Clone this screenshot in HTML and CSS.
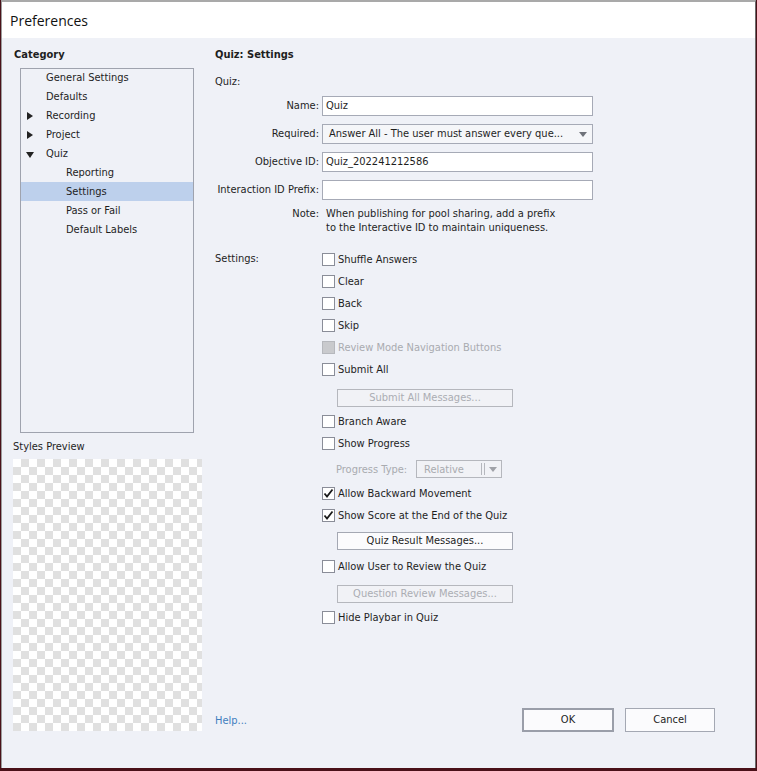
FILE: index.html
```html
<!DOCTYPE html>
<html>
<head>
<meta charset="utf-8">
<link rel="stylesheet" href="styles.css">
</head>
<body>
<div class="dialog">
  <div class="titlebar">Preferences</div>
  <div class="main">
    <div class="left">
      <div class="heading cat">Category</div>
      <div class="tree">
        <div class="node lvl0">General Settings</div>
        <div class="node lvl0">Defaults</div>
        <div class="node lvl0"><span class="tri right"></span>Recording</div>
        <div class="node lvl0"><span class="tri right"></span>Project</div>
        <div class="node lvl0"><span class="tri down"></span>Quiz</div>
        <div class="node lvl1">Reporting</div>
        <div class="node lvl1 sel">Settings</div>
        <div class="node lvl1">Pass or Fail</div>
        <div class="node lvl1">Default Labels</div>
      </div>
      <div class="preview-label">Styles Preview</div>
      <div class="checker"></div>
    </div>
    <div class="right">
      <div class="heading">Quiz: Settings</div>
      <div class="sect">Quiz:</div>
      <div class="form">
        <div class="flabel">Name:</div>
        <div class="input">Quiz</div>
        <div class="flabel">Required:</div>
        <div class="input select"><span class="seltext">Answer All - The user must answer every que...</span><span class="arrow"></span></div>
        <div class="flabel">Objective ID:</div>
        <div class="input">Quiz_202241212586</div>
        <div class="flabel">Interaction ID Prefix:</div>
        <div class="input"></div>
      </div>
      <div class="note">
        <div class="flabel">Note:</div>
        <div class="notetext">When publishing for pool sharing, add a prefix<br>to the Interactive ID to maintain uniqueness.</div>
      </div>
      <div class="settings">
        <div class="slabel">Settings:</div>
        <div class="opts">
          <div class="cb"><span class="box"></span>Shuffle Answers</div>
          <div class="cb"><span class="box"></span>Clear</div>
          <div class="cb"><span class="box"></span>Back</div>
          <div class="cb"><span class="box"></span>Skip</div>
          <div class="cb disabled"><span class="box"></span>Review Mode Navigation Buttons</div>
          <div class="cb"><span class="box"></span>Submit All</div>
          <div class="btn wide disabled b1">Submit All Messages...</div>
          <div class="cb r-after-btn"><span class="box"></span>Branch Aware</div>
          <div class="cb"><span class="box"></span>Show Progress</div>
          <div class="ptype">
            <span class="plabel">Progress Type:</span>
            <span class="psel"><span class="ptext">Relative</span><span class="pbar"></span><span class="arrow"></span></span>
          </div>
          <div class="cb r-after-ptype"><span class="box checked"><svg viewBox="0 0 13 13" width="13" height="13"><path d="M2.5 6.5 L5 9.5 L10.5 2.5" fill="none" stroke="#1a1a1a" stroke-width="1.8"/></svg></span>Allow Backward Movement</div>
          <div class="cb"><span class="box checked"><svg viewBox="0 0 13 13" width="13" height="13"><path d="M2.5 6.5 L5 9.5 L10.5 2.5" fill="none" stroke="#1a1a1a" stroke-width="1.8"/></svg></span>Show Score at the End of the Quiz</div>
          <div class="btn wide b2">Quiz Result Messages...</div>
          <div class="cb r-after-b2"><span class="box"></span>Allow User to Review the Quiz</div>
          <div class="btn wide disabled b3">Question Review Messages...</div>
          <div class="cb r-after-btn"><span class="box"></span>Hide Playbar in Quiz</div>
        </div>
      </div>
      <div class="footer">
        <span class="help">Help...</span>
        <span class="spacer"></span>
        <div class="btn dlg default">OK</div>
        <div class="btn dlg">Cancel</div>
      </div>
    </div>
  </div>
</div>
</body>
</html>
```
FILE: styles.css
```css
html, body {
  margin: 0;
  padding: 0;
  background: #4a1119;
}
body {
  width: 757px;
  height: 771px;
  overflow: hidden;
  font-family: "DejaVu Sans Condensed", "DejaVu Sans", sans-serif;
  font-size: 11px;
  color: #1e1e1e;
}
.dialog {
  margin-left: 1px;
  width: 753px;
  height: 766px;
  border-top: 2px solid #a9a9a9;
  border-left: 1px solid #9c9c9c;
  border-right: 1px solid #6a6a6a;
  background: #eff1f7;
  display: flex;
  flex-direction: column;
}
.titlebar {
  height: 36px;
  background: #ffffff;
  font-family: "Open Sans", "Noto Sans", sans-serif;
  font-size: 14px;
  line-height: 38px;
  padding-left: 8px;
  color: #111;
  flex: none;
}
.main {
  flex: 1;
  display: flex;
}
.left {
  width: 189px;
  padding-left: 11px;
  display: flex;
  flex-direction: column;
}
.heading {
  font-weight: bold;
  line-height: 16px;
  margin-top: 9px;
  height: 16px;
}
.cat { padding-left: 1px; }
.tree {
  margin-top: 5px;
  margin-left: 7px;
  width: 172px;
  height: 363px;
  border: 1px solid #9fa3ae;
}
.node {
  height: 19px;
  line-height: 19px;
  position: relative;
  white-space: nowrap;
}
.node:first-child { height: 18px; line-height: 18px; }
.lvl0 { padding-left: 25px; }
.lvl1 { padding-left: 45px; }
.sel { background: #bdd0ec; }
.tri {
  position: absolute;
  left: 6px;
  top: 6px;
  width: 0;
  height: 0;
}
.tri.right {
  border-top: 4px solid transparent;
  border-bottom: 4px solid transparent;
  border-left: 6px solid #222;
}
.tri.down {
  top: 8px;
  left: 5px;
  border-left: 4px solid transparent;
  border-right: 4px solid transparent;
  border-top: 6px solid #222;
}
.preview-label {
  margin-top: 6px;
  line-height: 16px;
  height: 16px;
}
.checker {
  margin-top: 4px;
  width: 189px;
  height: 272px;
  background-color: #ffffff;
  background-image:
    linear-gradient(45deg, #e0e0e0 25%, transparent 25%, transparent 75%, #e0e0e0 75%),
    linear-gradient(45deg, #e0e0e0 25%, transparent 25%, transparent 75%, #e0e0e0 75%);
  background-size: 16px 16px;
  background-position: 0 0, 8px 8px;
}
.right {
  flex: 1;
  padding-left: 13px;
  display: flex;
  flex-direction: column;
}
.sect {
  margin-top: 11px;
  line-height: 16px;
  height: 16px;
}
.form {
  margin-top: 6px;
  display: grid;
  grid-template-columns: 104px 271px;
  column-gap: 3px;
  row-gap: 8px;
}
.flabel {
  text-align: right;
  line-height: 20px;
  white-space: nowrap;
}
.input {
  height: 18px;
  border: 1px solid #a6aab6;
  background: #fff;
  line-height: 18px;
  padding-left: 3px;
  white-space: nowrap;
  overflow: hidden;
}
.select {
  background: #f5f6f9;
  display: flex;
  align-items: center;
  padding-left: 6px;
}
.seltext { flex: 1; }
.arrow {
  width: 0;
  height: 0;
  border-left: 4px solid transparent;
  border-right: 4px solid transparent;
  border-top: 5px solid #6f727a;
  margin-right: 5px;
}
.note {
  margin-top: 7px;
  display: flex;
}
.note .flabel {
  width: 104px;
  line-height: 14px;
}
.notetext {
  margin-left: 7px;
  line-height: 14px;
}
.settings {
  margin-top: 13px;
  display: flex;
}
.slabel {
  width: 107px;
  line-height: 22px;
}
.opts {
  display: flex;
  flex-direction: column;
}
.cb {
  height: 22px;
  display: flex;
  align-items: center;
  white-space: nowrap;
}
.box {
  width: 11px;
  height: 11px;
  border: 1px solid #8a8d98;
  background: #fff;
  margin-right: 3px;
  flex: none;
  position: relative;
}
.box svg {
  position: absolute;
  left: -1px;
  top: -1px;
}
.cb.disabled { color: #a9abb0; }
.cb.disabled .box {
  background: #c9cacd;
  border-color: #b6b8bd;
}
.btn {
  box-sizing: border-box;
  border: 1px solid #a4a8b3;
  background: #fbfbfd;
  text-align: center;
  white-space: nowrap;
}
.btn.disabled {
  color: #abadb3;
  background: #f1f2f6;
  border-color: #b5b7bd;
}
.wide {
  margin-left: 15px;
  width: 176px;
  height: 18px;
  line-height: 16px;
}
.b1 { margin-top: 9px; }
.b2 { margin-top: 6px; }
.b3 { margin-top: 8px; }
.r-after-btn { margin-top: 3px; }
.r-after-b2 { margin-top: 5px; }
.r-after-ptype { margin-top: 4px; }
.ptype {
  margin-top: 6px;
  height: 18px;
  display: flex;
  align-items: center;
  color: #a9abb0;
  white-space: nowrap;
}
.plabel {
  margin-left: 14px;
  width: 80px;
}
.psel {
  box-sizing: border-box;
  width: 86px;
  height: 18px;
  border: 1px solid #b5b7bd;
  background: #f1f2f6;
  display: flex;
  align-items: center;
  padding-left: 7px;
}
.ptext { flex: 1; }
.pbar {
  width: 2px;
  height: 12px;
  border-left: 1px solid #b5b7bd;
  border-right: 1px solid #b5b7bd;
  margin-right: 4px;
}
.psel .arrow { border-top-color: #a0a2a8; margin-right: 4px; }
.footer {
  margin-top: auto;
  margin-bottom: 36px;
  height: 24px;
  display: flex;
  align-items: center;
  padding-right: 40px;
}
.help {
  color: #3f7fbf;
}
.spacer { flex: 1; }
.dlg {
  width: 90px;
  height: 24px;
  line-height: 22px;
  margin-left: 11px;
}
.dlg.default {
  width: 92px;
  border: 2px solid #9a9ea9;
  line-height: 20px;
}
```
